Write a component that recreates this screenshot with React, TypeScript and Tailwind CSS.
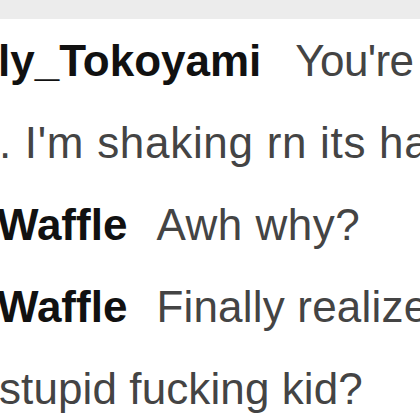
const rows = [
  { name: 'ly_Tokoyami', text: "You're not okay", shift: '-ml-[2px]', gap: 'mr-[34px]', track: 'tracking-[-0.6px]' },
  { name: '', text: ". I'm shaking rn its hard to breathe", shift: '-ml-[1px]', gap: '', track: 'tracking-[0.7px]' },
  { name: 'Waffle', text: 'Awh why?', shift: '-ml-[3px]', gap: 'mr-[29px]', track: 'tracking-[0.5px]' },
  { name: 'Waffle', text: 'Finally realized you are a', shift: '-ml-[3px]', gap: 'mr-[29px]', track: 'tracking-[0.2px]' },
  { name: '', text: 'stupid fucking kid?', shift: '-ml-[1px]', gap: '', track: 'tracking-[0.1px]' },
]

export default function App() {
  return (
    <div className="w-[420px] h-[420px] overflow-hidden bg-white font-['Liberation_Sans',Arial,sans-serif]">
      <div className="h-[19px] bg-[#ececec]" />
      <div className="pt-[1px] flex flex-col">
        {rows.map((row, idx) => (
          <div
            key={idx}
            className={`flex items-baseline whitespace-nowrap text-[44px] leading-[82px] ${row.shift}`}
          >
            {row.name && (
              <span className={`font-bold text-[#111111] ${row.gap}`}>{row.name}</span>
            )}
            <span className={`text-[#444444] ${row.track}`}>{row.text}</span>
          </div>
        ))}
      </div>
    </div>
  )
}
